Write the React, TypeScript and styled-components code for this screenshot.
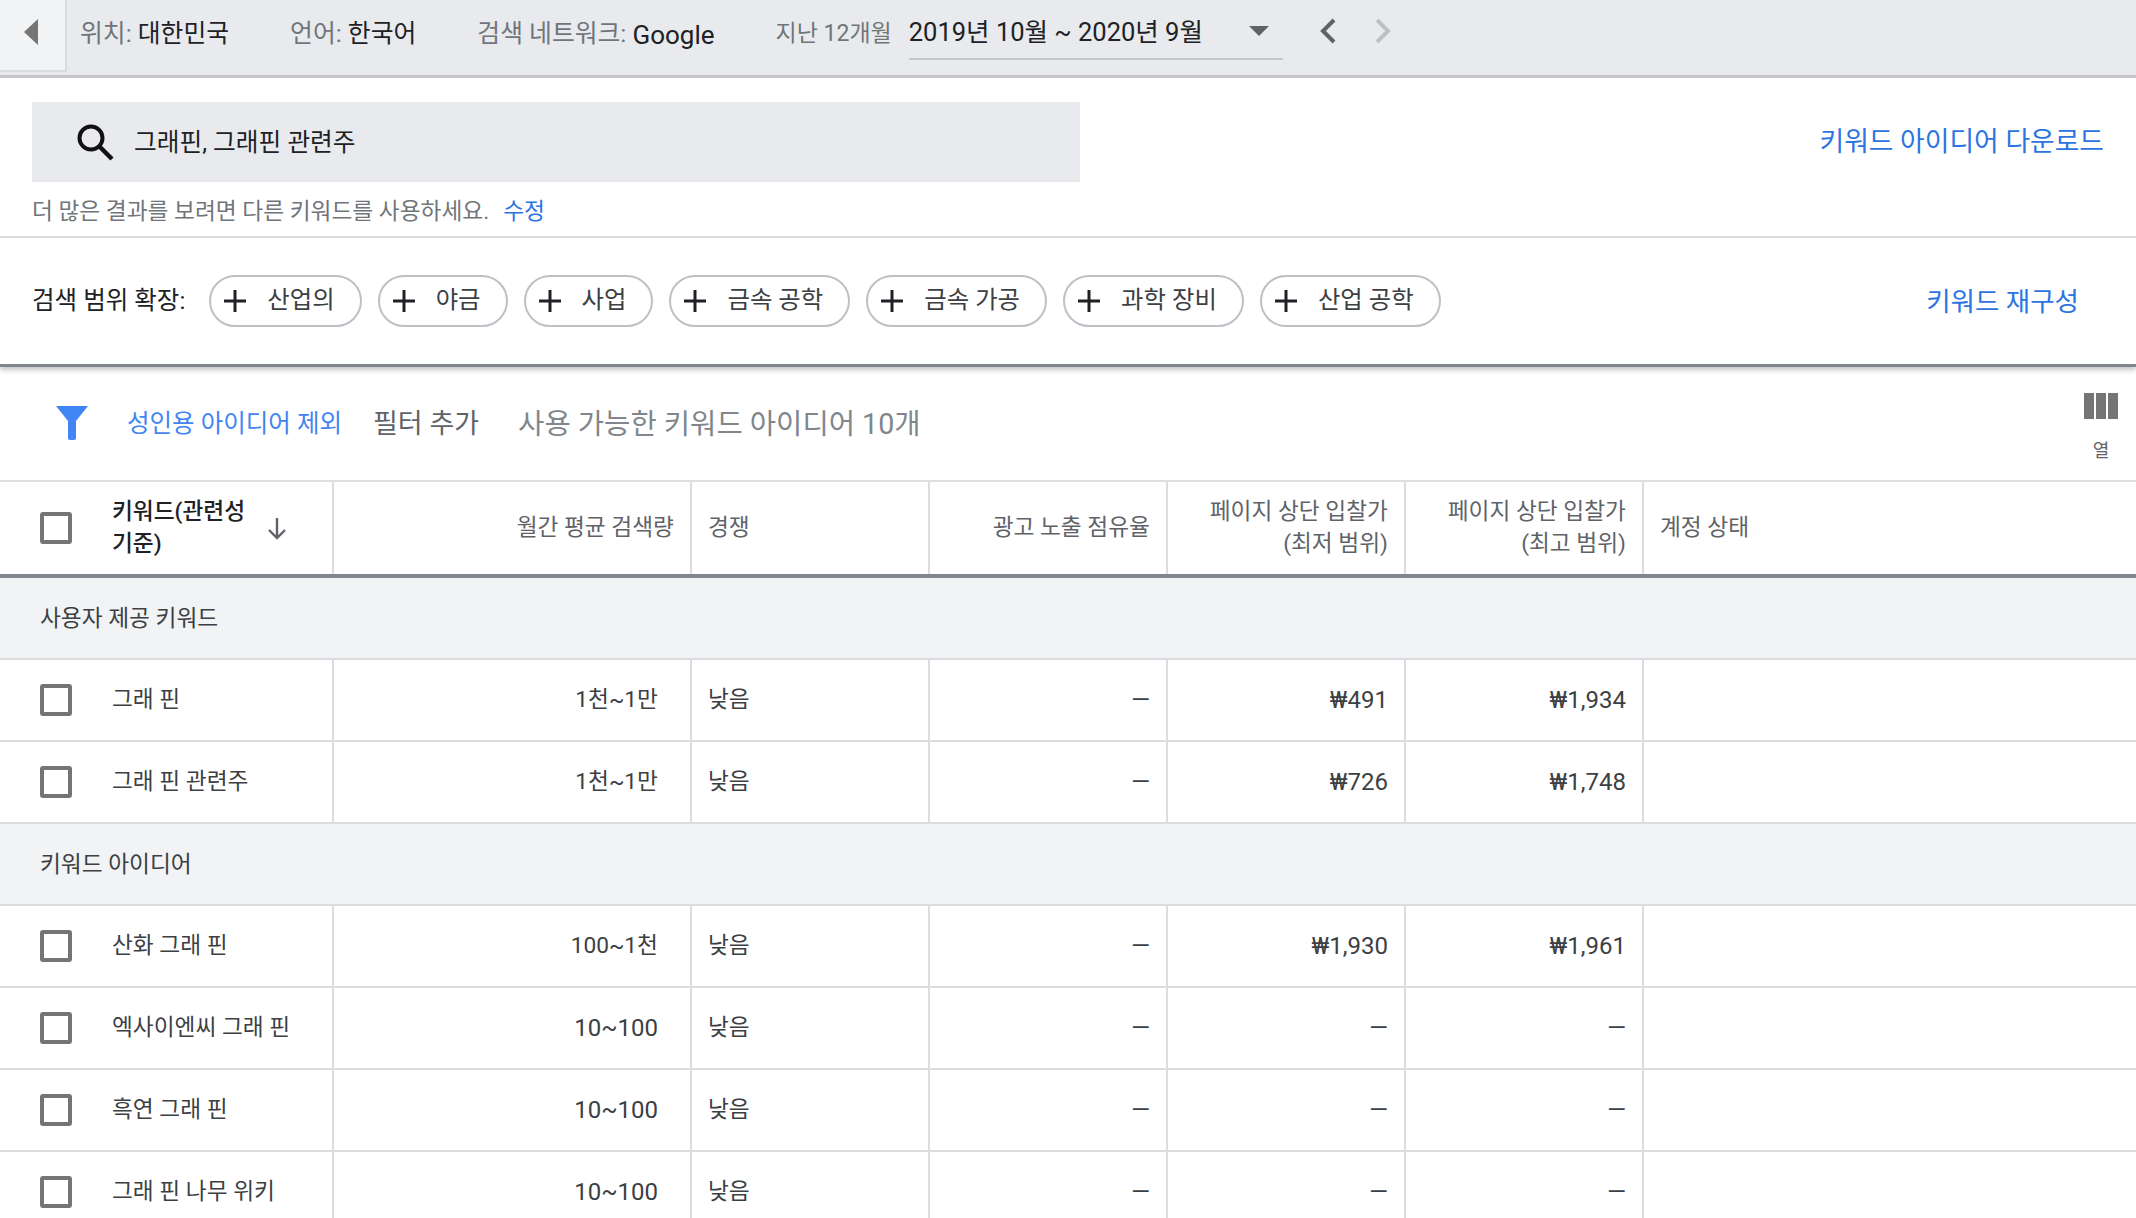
import React from "react"
import styled, { createGlobalStyle } from "styled-components"

const GlobalStyle = createGlobalStyle`
  html, body { margin: 0; padding: 0; background: #fff; }
  body { font-family: Roboto, "Noto Sans CJK KR", sans-serif; color: #3c4043; }
  * { box-sizing: border-box; }
`

const Page = styled.div`
  width: 2136px;
  height: 1218px;
  overflow: hidden;
`

const TopBar = styled.div`
  height: 78px;
  display: flex;
  align-items: flex-start;
  background: #e8eaed;
  border-bottom: 3px solid #c4c6c9;
`

const BackButton = styled.div`
  width: 67px;
  height: 72px;
  flex: none;
  display: flex;
  align-items: center;
  justify-content: center;
  background: #f1f3f4;
  border-right: 2px solid #dadce0;
  border-bottom: 2px solid #dadce0;
  padding: 0 4px 6px 0;
  svg { display: block; }
`

const Filters = styled.div`
  display: flex;
  align-items: center;
  height: 62px;
  padding-left: 13px;
  font-size: 24.8px;
`

const FilterItem = styled.span<{ $gap: number }>`
  margin-right: ${(p) => p.$gap}px;
  color: #70757a;
  white-space: nowrap;
  b { font-weight: 400; color: #202124; }
  em { font-style: normal; font-size: 26px; color: #202124; position: relative; top: 2px; }
`

const PeriodLabel = styled.span`
  font-size: 23px;
  color: #70757a;
  margin-right: 17px;
  white-space: nowrap;
`

const DateSelect = styled.div`
  width: 374px;
  height: 60px;
  align-self: flex-start;
  display: flex;
  align-items: center;
  justify-content: space-between;
  padding-right: 14px;
  border-bottom: 2px solid #c4c6c9;
  color: #202124;
  font-size: 25.5px;
  white-space: nowrap;
`

const Caret = styled.i`
  width: 0;
  height: 0;
  margin-top: 4px;
  border-left: 10px solid transparent;
  border-right: 10px solid transparent;
  border-top: 10px solid #5f6368;
`

const Pager = styled.div`
  display: flex;
  gap: 39px;
  margin-left: 37px;
  svg { display: block; }
`

const SearchSection = styled.div`
  height: 160px;
  padding: 24px 32px 0;
  border-bottom: 2px solid #e0e0e0;
`

const SearchRow = styled.div`
  display: flex;
  justify-content: space-between;
  align-items: center;
`

const SearchBox = styled.div`
  width: 1048px;
  height: 80px;
  display: flex;
  align-items: center;
  padding: 0 0 4px 44px;
  gap: 20px;
  background: #e8eaed;
  color: #202124;
  font-size: 24.7px;
  svg { margin-top: 4px; }
`

const BigLink = styled.a`
  color: #2b74e2;
  font-size: 26.8px;
  white-space: nowrap;
`

const DownloadLink = styled(BigLink)`
  padding-bottom: 6px;
`

const Hint = styled.div`
  margin-top: 11px;
  font-size: 22.7px;
  color: #70757a;
  a { color: #2b74e2; margin-left: 14px; }
`

const ExpandBar = styled.div`
  height: 129px;
  display: flex;
  align-items: flex-start;
  padding: 37px 57px 0 32px;
  border-bottom: 3px solid #80868b;
  box-shadow: 0 3px 5px rgba(60, 64, 67, 0.3);
  position: relative;
`

const ExpandLabel = styled.span`
  line-height: 52px;
  font-size: 24.5px;
  color: #202124;
  margin-right: 24px;
  white-space: nowrap;
`

const Chips = styled.div`
  display: flex;
  gap: 16px;
  flex: 1;
`

const Chip = styled.div`
  height: 52px;
  display: flex;
  align-items: center;
  gap: 20px;
  padding: 0 25px 0 12px;
  border: 2px solid #bdc1c6;
  border-radius: 26px;
  font-size: 24.4px;
  line-height: 46px;
  color: #3c4043;
  white-space: nowrap;
  span { position: relative; top: -1px; }
  svg { flex: none; }
`

const RebuildLink = styled(BigLink)`
  line-height: 54px;
  font-size: 26.5px;
`

const FilterBar = styled.div`
  height: 115px;
  display: flex;
  align-items: center;
  padding: 0 18px 5px 56px;
  border-bottom: 2px solid #e0e0e0;
`

const FunnelIcon = styled.svg`
  flex: none;
  margin: 4px 39px 0 0;
`

const AdultFilter = styled.span`
  color: #4285f4;
  font-size: 24.5px;
  margin-right: 31px;
`

const AddFilter = styled.span`
  color: #5f6368;
  font-size: 27px;
  margin-right: 39px;
`

const Available = styled.span`
  color: #80868b;
  font-size: 28.6px;
  flex: 1;
`

const ColumnsButton = styled.div`
  display: flex;
  flex-direction: column;
  align-items: center;
  gap: 17px;
  margin-top: 12px;
  font-size: 18px;
  color: #5f6368;
`

const ColumnsIcon = styled.div`
  display: flex;
  gap: 2px;
  i {
    width: 10px;
    height: 26px;
    background: #757575;
  }
`

const Row = styled.div<{ $head?: boolean }>`
  display: grid;
  grid-template-columns: 334px 358px 238px 238px 238px 238px 1fr;
  height: ${(p) => (p.$head ? "96px" : "82px")};
  border-bottom: ${(p) => (p.$head ? "4px solid #80868b" : "2px solid #dadce0")};
`

const Cell = styled.div<{ $right?: boolean; $head?: boolean; $last?: boolean; $num?: boolean }>`
  display: flex;
  align-items: center;
  justify-content: ${(p) => (p.$right ? "flex-end" : "flex-start")};
  text-align: ${(p) => (p.$right ? "right" : "left")};
  padding: 0 16px;
  border-right: ${(p) => (p.$last ? "none" : "2px solid #dadce0")};
  font-size: ${(p) => (p.$num ? 24 : 22.7)}px;
  line-height: 32px;
  color: ${(p) => (p.$head ? "#5f6368" : "#3c4043")};
`

const VolumeCell = styled(Cell)`
  padding-right: 32px;
`

const KeywordCell = styled(Cell)`
  padding: 0 0 0 40px;
  gap: 32px;
`

const KeywordHead = styled(KeywordCell)`
  color: #202124;
  font-weight: 500;
  span { width: 140px; flex: none; }
  svg { margin-left: -18px; flex: none; }
`

const Check = styled.i`
  width: 32px;
  height: 32px;
  flex: none;
  margin-right: 8px;
  border: 4px solid #757575;
  border-radius: 3px;
`

const GroupRow = styled.div`
  height: 82px;
  display: flex;
  align-items: center;
  padding: 0 40px 4px;
  background: #f1f3f4;
  border-bottom: 2px solid #dadce0;
  font-size: 22.7px;
  color: #3c4043;
`

const Plus = () => (
  <svg width="24" height="24" viewBox="0 0 24 24">
    <path d="M12 1v22M1 12h22" stroke="#202124" strokeWidth="3" fill="none" />
  </svg>
)

const chips = ["산업의", "야금", "사업", "금속 공학", "금속 가공", "과학 장비", "산업 공학"]

const group1 = [
  ["그래 핀", "1천~1만", "낮음", "—", "₩491", "₩1,934"],
  ["그래 핀 관련주", "1천~1만", "낮음", "—", "₩726", "₩1,748"],
]

const group2 = [
  ["산화 그래 핀", "100~1천", "낮음", "—", "₩1,930", "₩1,961"],
  ["엑사이엔씨 그래 핀", "10~100", "낮음", "—", "—", "—"],
  ["흑연 그래 핀", "10~100", "낮음", "—", "—", "—"],
  ["그래 핀 나무 위키", "10~100", "낮음", "—", "—", "—"],
]

function KeywordRow({ data }: { data: string[] }) {
  return (
    <Row>
      <KeywordCell>
        <Check />
        {data[0]}
      </KeywordCell>
      <VolumeCell $right $num={data[1] === "10~100"}>{data[1]}</VolumeCell>
      <Cell>{data[2]}</Cell>
      <Cell $right $num>{data[3]}</Cell>
      <Cell $right $num>{data[4]}</Cell>
      <Cell $right $num>{data[5]}</Cell>
      <Cell $last />
    </Row>
  )
}

export default function App() {
  return (
    <Page>
      <GlobalStyle />
      <TopBar>
        <BackButton>
          <svg width="14" height="26" viewBox="0 0 14 26">
            <path d="M14 0v26L0 13z" fill="#757575" />
          </svg>
        </BackButton>
        <Filters>
          <FilterItem $gap={61}>위치: <b>대한민국</b></FilterItem>
          <FilterItem $gap={61}>언어: <b>한국어</b></FilterItem>
          <FilterItem $gap={61}>검색 네트워크: <em>Google</em></FilterItem>
          <PeriodLabel>지난 12개월</PeriodLabel>
          <DateSelect>
            2019년 10월 ~ 2020년 9월
            <Caret />
          </DateSelect>
          <Pager>
            <svg width="16" height="26" viewBox="0 0 16 26">
              <path d="M14 2L3 13l11 11" stroke="#5f6368" strokeWidth="4" fill="none" />
            </svg>
            <svg width="16" height="26" viewBox="0 0 16 26">
              <path d="M2 2l11 11L2 24" stroke="#bdc1c6" strokeWidth="4" fill="none" />
            </svg>
          </Pager>
        </Filters>
      </TopBar>
      <SearchSection>
        <SearchRow>
          <SearchBox>
            <svg width="38" height="38" viewBox="0 0 38 38">
              <circle cx="15" cy="15" r="11.5" stroke="#111" strokeWidth="4" fill="none" />
              <path d="M23 23l13 13" stroke="#111" strokeWidth="4.5" fill="none" />
            </svg>
            그래핀, 그래핀 관련주
          </SearchBox>
          <DownloadLink>키워드 아이디어 다운로드</DownloadLink>
        </SearchRow>
        <Hint>
          더 많은 결과를 보려면 다른 키워드를 사용하세요.
          <a>수정</a>
        </Hint>
      </SearchSection>
      <ExpandBar>
        <ExpandLabel>검색 범위 확장:</ExpandLabel>
        <Chips>
          {chips.map((c) => (
            <Chip key={c}>
              <Plus />
              <span>{c}</span>
            </Chip>
          ))}
        </Chips>
        <RebuildLink>키워드 재구성</RebuildLink>
      </ExpandBar>
      <FilterBar>
        <FunnelIcon width="32" height="34" viewBox="0 0 32 34">
          <path d="M0 0h32L20 15v17a2 2 0 0 1-2 2h-4a2 2 0 0 1-2-2V15z" fill="#4285f4" />
        </FunnelIcon>
        <AdultFilter>성인용 아이디어 제외</AdultFilter>
        <AddFilter>필터 추가</AddFilter>
        <Available>사용 가능한 키워드 아이디어 10개</Available>
        <ColumnsButton>
          <ColumnsIcon>
            <i />
            <i />
            <i />
          </ColumnsIcon>
          열
        </ColumnsButton>
      </FilterBar>
      <Row $head>
        <KeywordHead $head>
          <Check />
          <span>키워드(관련성 기준)</span>
          <svg width="22" height="24" viewBox="0 0 22 24">
            <path d="M11 2v20M3 14l8 8 8-8" stroke="#5f6368" strokeWidth="2.4" fill="none" />
          </svg>
        </KeywordHead>
        <Cell $right $head>월간 평균 검색량</Cell>
        <Cell $head>경쟁</Cell>
        <Cell $right $head>광고 노출 점유율</Cell>
        <Cell $right $head>페이지 상단 입찰가<br />(최저 범위)</Cell>
        <Cell $right $head>페이지 상단 입찰가<br />(최고 범위)</Cell>
        <Cell $head $last>계정 상태</Cell>
      </Row>
      <GroupRow>사용자 제공 키워드</GroupRow>
      {group1.map((d) => (
        <KeywordRow key={d[0]} data={d} />
      ))}
      <GroupRow>키워드 아이디어</GroupRow>
      {group2.map((d) => (
        <KeywordRow key={d[0]} data={d} />
      ))}
    </Page>
  )
}
